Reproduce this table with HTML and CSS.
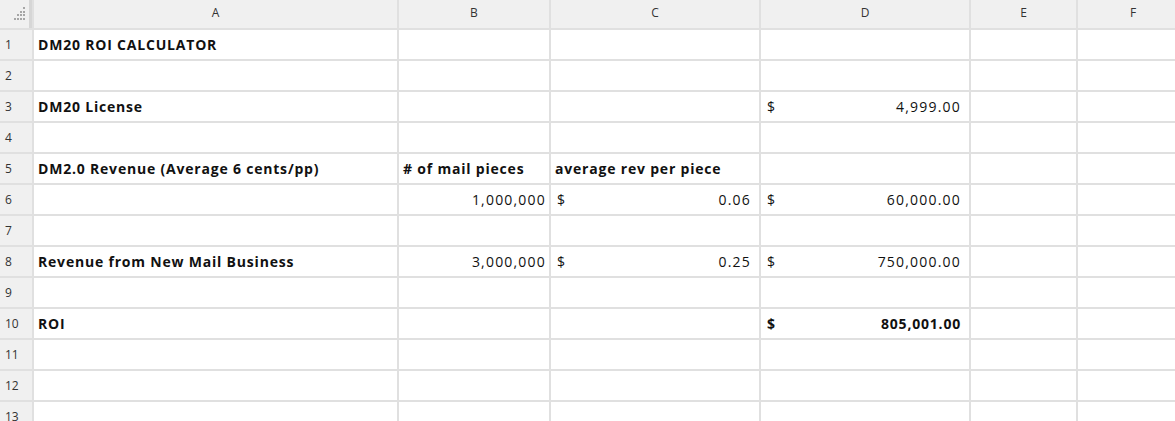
FILE: index.html
```html
<!DOCTYPE html>
<html>
<head>
<meta charset="utf-8">
<link rel="stylesheet" href="styles.css">
</head>
<body>
<div class="sheet">
  <div class="corner">
    <svg width="12" height="13" viewBox="0 0 12 13" class="grip">
      <rect x="9" y="0" width="2" height="2"/>
      <rect x="6" y="4" width="2" height="2"/><rect x="9" y="4" width="2" height="2"/>
      <rect x="3" y="7" width="2" height="2"/><rect x="6" y="7" width="2" height="2"/><rect x="9" y="7" width="2" height="2"/>
      <rect x="0" y="11" width="2" height="2"/><rect x="3" y="11" width="2" height="2"/><rect x="6" y="11" width="2" height="2"/><rect x="9" y="11" width="2" height="2"/>
    </svg>
  </div>
  <div class="colh">A</div><div class="colh">B</div><div class="colh">C</div><div class="colh">D</div><div class="colh">E</div><div class="colh">F</div>

  <div class="rowh">1</div><div class="cell b">DM20 ROI CALCULATOR</div><div class="cell"></div><div class="cell"></div><div class="cell"></div><div class="cell"></div><div class="cell"></div>
  <div class="rowh">2</div><div class="cell"></div><div class="cell"></div><div class="cell"></div><div class="cell"></div><div class="cell"></div><div class="cell"></div>
  <div class="rowh">3</div><div class="cell b">DM20 License</div><div class="cell"></div><div class="cell"></div><div class="cell acc"><span>$</span><span>4,999.00</span></div><div class="cell"></div><div class="cell"></div>
  <div class="rowh">4</div><div class="cell"></div><div class="cell"></div><div class="cell"></div><div class="cell"></div><div class="cell"></div><div class="cell"></div>
  <div class="rowh">5</div><div class="cell b">DM2.0 Revenue (Average 6 cents/pp)</div><div class="cell b"># of mail pieces</div><div class="cell b">average rev per piece</div><div class="cell"></div><div class="cell"></div><div class="cell"></div>
  <div class="rowh">6</div><div class="cell"></div><div class="cell num">1,000,000</div><div class="cell acc"><span>$</span><span>0.06</span></div><div class="cell acc"><span>$</span><span>60,000.00</span></div><div class="cell"></div><div class="cell"></div>
  <div class="rowh">7</div><div class="cell"></div><div class="cell"></div><div class="cell"></div><div class="cell"></div><div class="cell"></div><div class="cell"></div>
  <div class="rowh">8</div><div class="cell b">Revenue from New Mail Business</div><div class="cell num">3,000,000</div><div class="cell acc"><span>$</span><span>0.25</span></div><div class="cell acc"><span>$</span><span>750,000.00</span></div><div class="cell"></div><div class="cell"></div>
  <div class="rowh">9</div><div class="cell"></div><div class="cell"></div><div class="cell"></div><div class="cell"></div><div class="cell"></div><div class="cell"></div>
  <div class="rowh">10</div><div class="cell b">ROI</div><div class="cell"></div><div class="cell"></div><div class="cell acc b"><span>$</span><span>805,001.00</span></div><div class="cell"></div><div class="cell"></div>
  <div class="rowh">11</div><div class="cell"></div><div class="cell"></div><div class="cell"></div><div class="cell"></div><div class="cell"></div><div class="cell"></div>
  <div class="rowh">12</div><div class="cell"></div><div class="cell"></div><div class="cell"></div><div class="cell"></div><div class="cell"></div><div class="cell"></div>
  <div class="rowh">13</div><div class="cell"></div><div class="cell"></div><div class="cell"></div><div class="cell"></div><div class="cell"></div><div class="cell"></div>
</div>
</body>
</html>
```

FILE: styles.css
```css
html, body {
  margin: 0;
  padding: 0;
  background: #ffffff;
  overflow: hidden;
  height: 421px;
}

.sheet {
  display: grid;
  grid-template-columns: 32px 363px 150px 208px 208px 105px 110px;
  grid-template-rows: 28px;
  grid-auto-rows: 29px;
  gap: 2px;
  background: #e0e0e0;
  width: 1190px;
  font-family: "Open Sans", "Liberation Sans", sans-serif;
  font-size: 14px;
  letter-spacing: 1.2px;
  color: #111;
}

.corner {
  background: #f0f0f0;
  display: flex;
  justify-content: flex-end;
  align-items: flex-end;
  padding: 0 6px 8px 0;
  box-shadow: inset -3px 0 0 #d6d6d6;
}

.grip {
  fill: #a6a6a6;
}

.colh {
  background: #f0f0f0;
  color: #333;
  font-size: 12px;
  letter-spacing: 0;
  display: flex;
  justify-content: center;
  align-items: center;
  padding-bottom: 4px;
}

.rowh {
  background: #f0f0f0;
  color: #333;
  font-size: 12px;
  letter-spacing: 0;
  display: flex;
  align-items: center;
  padding-left: 5px;
}

.cell {
  background: #ffffff;
  display: flex;
  align-items: center;
  padding: 0 4px;
  white-space: nowrap;
  overflow: hidden;
}

.b {
  font-weight: 700;
  letter-spacing: 0.8px;
}

.num {
  justify-content: flex-end;
  padding-right: 3px;
}

.acc {
  justify-content: space-between;
  padding-left: 6px;
  padding-right: 8px;
}
```
